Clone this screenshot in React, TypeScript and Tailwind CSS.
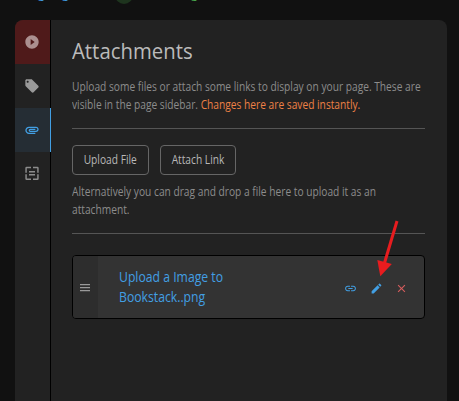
import type { ReactNode } from 'react';

const icons = {
  play: 'M12 2C6.48 2 2 6.48 2 12s4.48 10 10 10 10-4.48 10-10S17.52 2 12 2zm-2 14.5v-9l6 4.5z',
  tag: 'M21.41 11.58l-9-9C12.05 2.22 11.55 2 11 2H4c-1.1 0-2 .9-2 2v7c0 .55.22 1.05.59 1.42l9 9c.36.36.86.58 1.41.58.55 0 1.05-.22 1.41-.59l7-7c.37-.36.59-.86.59-1.41 0-.55-.23-1.06-.59-1.42zM5.5 7C4.67 7 4 6.33 4 5.5S4.67 4 5.5 4 7 4.67 7 5.5 6.33 7 5.5 7z',
  attach: 'M2 12.5C2 9.46 4.46 7 7.5 7H18c2.21 0 4 1.79 4 4s-1.79 4-4 4H9.5C8.12 15 7 13.88 7 12.5S8.12 10 9.5 10H17v2H9.41c-.55 0-.55 1 0 1H18c1.1 0 2-.9 2-2s-.9-2-2-2H7.5C5.57 9 4 10.57 4 12.5S5.57 16 7.5 16H17v2H7.5C4.46 18 2 15.54 2 12.5z',
  template: 'M4 1h6.5v2.2H4.2v6.8H2V3a2 2 0 0 1 2-2zM13.5 1H20a2 2 0 0 1 2 2v7h-2.2V3.2h-6.3zM19.8 12.5H22V19a2 2 0 0 1-2 2h-6.5v-2.2h6.3zM2 12.5h2.2v6.3h6.3V21H4a2 2 0 0 1-2-2zM7.5 7.5h9v2.2h-9zM7.5 12h9v2.2h-9z',
  grip: 'M2 6h20v2.4H2zM2 12h20v2.4H2zM2 18h20v2.4H2z',
  link: 'M3.9 12c0-1.71 1.39-3.1 3.1-3.1h4V7H7c-2.76 0-5 2.24-5 5s2.24 5 5 5h4v-1.9H7c-1.71 0-3.1-1.39-3.1-3.1zM8 13h8v-2H8v2zm9-6h-4v1.9h4c1.71 0 3.1 1.39 3.1 3.1s-1.39 3.1-3.1 3.1h-4V17h4c2.76 0 5-2.24 5-5s-2.24-5-5-5z',
  edit: 'M3 17.25V21h3.75L17.81 9.94l-3.75-3.75L3 17.25zM20.71 7.04c.39-.39.39-1.02 0-1.41l-2.34-2.34c-.39-.39-1.02-.39-1.41 0l-1.83 1.83 3.75 3.75 1.83-1.83z',
  close: 'M19 6.41L17.59 5 12 10.59 6.41 5 5 6.41 10.59 12 5 17.59 6.41 19 12 13.41 17.59 19 19 17.59 13.41 12z',
};

function Icon({ name, className }: { name: keyof typeof icons; className: string }) {
  return (
    <svg viewBox="0 0 24 24" fill="currentColor" className={className}>
      <path d={icons[name]} />
    </svg>
  );
}

function Tab({ name, className }: { name: keyof typeof icons; className: string }) {
  return (
    <button type="button" className={`flex h-11 w-9 items-center border-r pl-[9px] ${className}`}>
      <Icon name={name} className="size-4" />
    </button>
  );
}

function OutlineButton({ className, children }: { className: string; children: ReactNode }) {
  return (
    <button
      type="button"
      className={`flex h-[30px] items-center justify-center rounded border border-[#666] text-xs whitespace-nowrap text-[#b8b8b8] ${className}`}
    >
      <span className="scale-x-[0.85]">{children}</span>
    </button>
  );
}

export default function App() {
  return (
    <div className="relative flex h-[401px] w-[459px] flex-col overflow-hidden bg-[#111] font-['Open_Sans','Noto_Sans',sans-serif]">
      {/* Bottom edge of the page toolbar */}
      <div className="flex h-5 shrink-0 items-start overflow-hidden text-xs leading-5">
        <span className="-mt-4 ml-[38px] w-[24px] text-[#429fe3]">g</span>
        <span className="-mt-4 w-[53px] text-[#429fe3]">g</span>
        <span className="-mt-[14px] size-[18px] rounded-full bg-[#1e341e]" />
        <span className="-mt-4 ml-[58px] text-[#4caf50]">g</span>
      </div>

      <div className="ml-[15px] flex w-[432px] grow overflow-hidden rounded-t-lg bg-[#222]">
        <nav className="flex w-9 shrink-0 flex-col">
          <Tab name="play" className="border-black bg-[#4f1a1a] text-[#ab8f8f]" />
          <Tab name="tag" className="border-black text-[#999]" />
          <Tab name="attach" className="border-[#429fe3] bg-[#252d34] text-[#429fe3]" />
          <Tab name="template" className="border-black text-[#8c8c8c]" />
          <div className="grow border-r border-black" />
        </nav>

        <main className="ml-[21px] w-[353px] pt-[14px]">
          <h4 className="origin-left scale-x-[0.925] text-[22px] leading-8 text-[#bbb]">Attachments</h4>

          <p className="mt-3 origin-left scale-x-[0.85] text-xs leading-[18px] whitespace-nowrap text-[#8c8c8c]">
            Upload some files or attach some links to display on your page. These are
            <br />
            visible in the page sidebar. <span className="text-[#ee8146]">Changes here are saved instantly.</span>
          </p>

          <hr className="mt-[14px] border-[#555]" />

          <div className="mt-4 flex gap-[11px]">
            <OutlineButton className="w-[77px]">Upload File</OutlineButton>
            <OutlineButton className="w-[76px]">Attach Link</OutlineButton>
          </div>

          <p className="mt-2 origin-left scale-x-[0.85] text-xs leading-[18px] whitespace-nowrap text-[#8c8c8c]">
            Alternatively you can drag and drop a file here to upload it as an
            <br />
            attachment.
          </p>

          <hr className="mt-[14px] border-[#555]" />

          <div className="mt-[21px] flex h-16 overflow-hidden rounded border border-black bg-[#333]">
            <div className="flex w-[25px] items-center justify-center bg-[#2d2d2d] pr-px text-[#999]">
              <Icon name="grip" className="size-3" />
            </div>
            <a href="#" className="mt-[11px] ml-[21px] w-[225px] origin-left scale-x-[0.872] text-sm leading-5 text-[#429fe3]">
              Upload a Image to
              <br />
              Bookstack..png
            </a>
            <div className="flex items-center gap-[12.5px] pt-[3px]">
              <Icon name="link" className="size-[13px] text-[#429fe3]" />
              <Icon name="edit" className="size-[13px] text-[#429fe3]" />
              <Icon name="close" className="size-[13px] text-[#d65d5d]" />
            </div>
          </div>
        </main>
      </div>

      {/* Arrow pointing at the edit action */}
      <svg viewBox="0 0 24 58" className="absolute top-[220px] left-[376px] h-[58px] w-6">
        <path d="M21 1L8.5 43" stroke="#e81c1f" strokeWidth="3" />
        <path d="M1.3 40L15.8 44L4.3 56.3z" fill="#e81c1f" />
      </svg>
    </div>
  );
}
